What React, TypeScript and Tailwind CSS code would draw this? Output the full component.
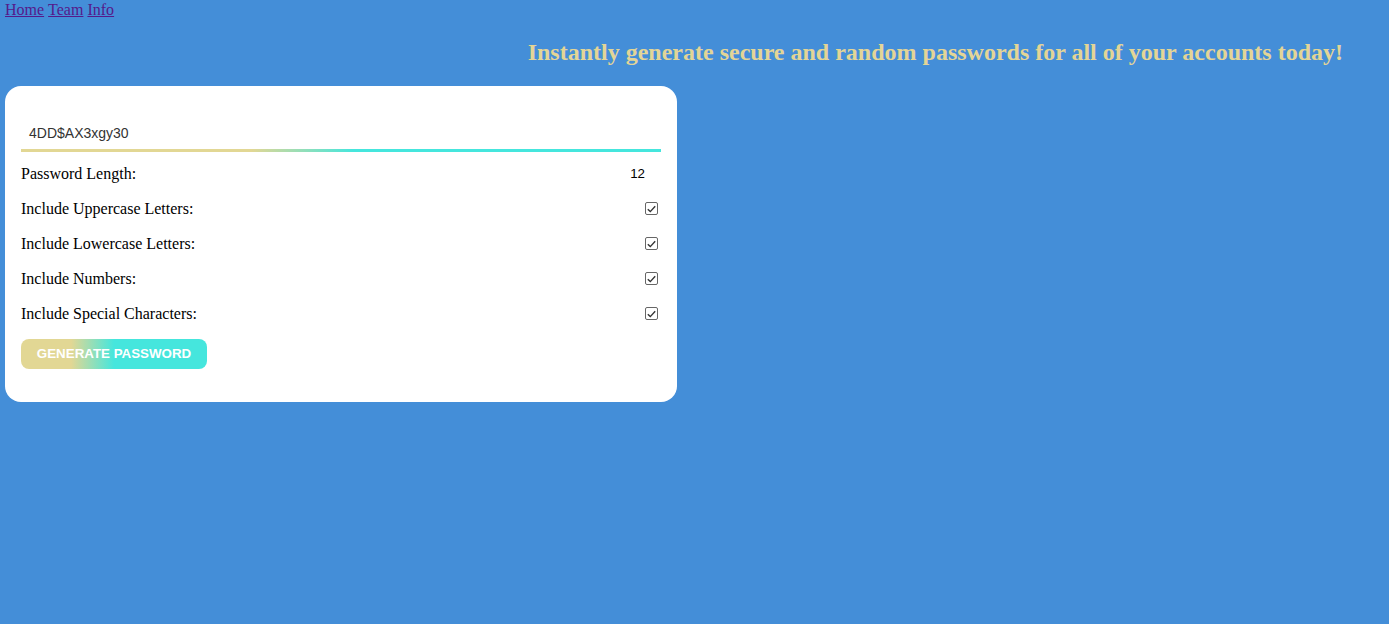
import React from "react";

function Check() {
  return (
    <span className="mr-[3px] flex h-[13px] w-[13px] items-center justify-center rounded-[2px] border border-[#666] bg-white">
      <svg width="9" height="8" viewBox="0 0 9 8" fill="none">
        <path d="M0.8 4.2 L3.3 6.6 L8.2 1.2" stroke="#333" strokeWidth="1.4" />
      </svg>
    </span>
  );
}

export default function App() {
  const rows = [
    "Include Uppercase Letters:",
    "Include Lowercase Letters:",
    "Include Numbers:",
    "Include Special Characters:",
  ];
  return (
    <div className="min-h-[624px] bg-[#448ed8] font-['Liberation_Serif',serif] text-black">
      <nav className="flex h-[19px] gap-[4px] px-[5px] pt-[1px] text-[16px] leading-[18px]">
        <a href="#" className="text-[#551a8b] underline">Home</a>
        <a href="#" className="text-[#551a8b] underline">Team</a>
        <a href="#" className="text-[#551a8b] underline">Info</a>
      </nav>
      <h2 className="mt-[19px] pr-[46px] text-right text-[24px] font-bold leading-[28px] text-[#e3d596]">
        Instantly generate secure and random passwords for all of your accounts today!
      </h2>
      <div className="ml-[5px] mt-[20px] w-[672px] rounded-[16px] bg-white p-[16px] pb-[33px]">
        <div className="flex h-[47px] items-end px-[8px] pb-[7px] font-['Liberation_Sans',sans-serif] text-[14px] leading-[17px] text-[#333]">
          4DD$AX3xgy30
        </div>
        <div className="h-[3px] w-full bg-[linear-gradient(90deg,#e2d794_36%,#45e6dd_52%)]" />
        <div className="mt-[4px] flex h-[35px] items-center justify-between text-[16px]">
          <span>Password Length:</span>
          <span className="mr-[16px] font-['Liberation_Sans',sans-serif] text-[13.33px]">12</span>
        </div>
        {rows.map((r) => (
          <div key={r} className="flex h-[35px] items-center justify-between text-[16px]">
            <span>{r}</span>
            <Check />
          </div>
        ))}
        <button className="mt-[8px] flex h-[30px] w-[186px] items-center justify-center rounded-[8px] bg-[linear-gradient(90deg,#e2d794_27%,#45e6dd_50%)] font-['Liberation_Sans',sans-serif] text-[13.33px] font-bold text-white">
          GENERATE PASSWORD
        </button>
      </div>
    </div>
  );
}
